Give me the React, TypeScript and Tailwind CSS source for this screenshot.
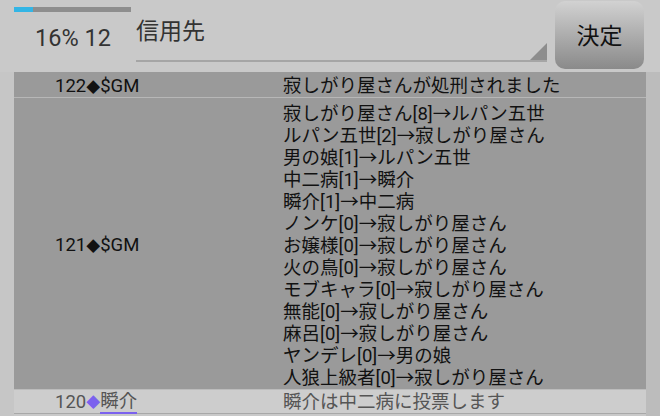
import React from 'react';

const votes = [
  '寂しがり屋さん[8]→ルパン五世',
  'ルパン五世[2]→寂しがり屋さん',
  '男の娘[1]→ルパン五世',
  '中二病[1]→瞬介',
  '瞬介[1]→中二病',
  'ノンケ[0]→寂しがり屋さん',
  'お嬢様[0]→寂しがり屋さん',
  '火の鳥[0]→寂しがり屋さん',
  'モブキャラ[0]→寂しがり屋さん',
  '無能[0]→寂しがり屋さん',
  '麻呂[0]→寂しがり屋さん',
  'ヤンデレ[0]→男の娘',
  '人狼上級者[0]→寂しがり屋さん',
];

const font = { fontFamily: 'Roboto, "Noto Sans CJK JP", sans-serif' };

export default function App() {
  return (
    <div className="w-[660px] h-[416px] bg-[#c9c9c9] flex flex-col overflow-hidden text-[#111]" style={font}>
      {/* header */}
      <div className="h-[72px] flex pl-[14px] pr-[16px] shrink-0">
        <div className="w-[122px] flex flex-col">
          <div className="mt-[7px] h-[5px] w-[117px] bg-[#8e8e8e]">
            <div className="h-full w-[19px] bg-[#33b5e5]" />
          </div>
          <div className="mt-[11px] pl-[21px] text-[23.5px] leading-[30px] text-[#333]">16% 12</div>
        </div>
        <div className="flex-1 relative border-b-2 border-[#a5a5a5] h-[62px]">
          <div className="pt-[17px] text-[23px] leading-[30px] text-[#333]">信用先</div>
          <svg className="absolute right-0 bottom-0" width="17" height="17" viewBox="0 0 17 17">
            <polygon points="17,0 17,17 0,17" fill="#8d8d8d" />
          </svg>
        </div>
        <button className="ml-[8px] mt-[1px] w-[89px] h-[68px] pt-[4px] rounded-[10px] bg-gradient-to-b from-[#d2d2d2] to-[#8a8a8a] text-[23px] text-[#111] flex items-center justify-center">
          決定
        </button>
      </div>

      {/* log table */}
      <div className="flex flex-1">
        <div className="w-[14px] bg-[#c6c6c6]" />
        <div className="w-[632px] flex flex-col text-[18.5px]">
          <div className="flex h-[26px] items-center bg-[#9a9a9a] pt-[5px] border-b border-[#b7b7b7]">
            <div className="w-[269px] pl-[41px] flex items-center">
              122<span className="text-[14px]">◆</span>$GM
            </div>
            <div>寂しがり屋さんが処刑されました</div>
          </div>
          <div className="flex items-center bg-[#9a9a9a] pt-[5px] border-b border-[#bcbcbc]">
            <div className="w-[269px] pl-[41px] flex items-center">
              121<span className="text-[14px]">◆</span>$GM
            </div>
            <div className="flex flex-col">
              {votes.map((v) => (
                <div key={v} className="leading-[22px]">{v}</div>
              ))}
            </div>
          </div>
          <div className="flex h-[24px] items-center pt-[2px] bg-[#cdcdcd] text-[#555] border-b border-[#a8a8a8]">
            <div className="w-[269px] pl-[41px] flex items-center">
              <span>120</span>
              <span className="text-[14px] text-[#7b61ee]">◆</span>
              <span className="border-b-2 border-[#7b61ee] leading-[21px]">瞬介</span>
            </div>
            <div>瞬介は中二病に投票します</div>
          </div>
        </div>
        <div className="flex-1 bg-[#bcbcbc]" />
      </div>
    </div>
  );
}
